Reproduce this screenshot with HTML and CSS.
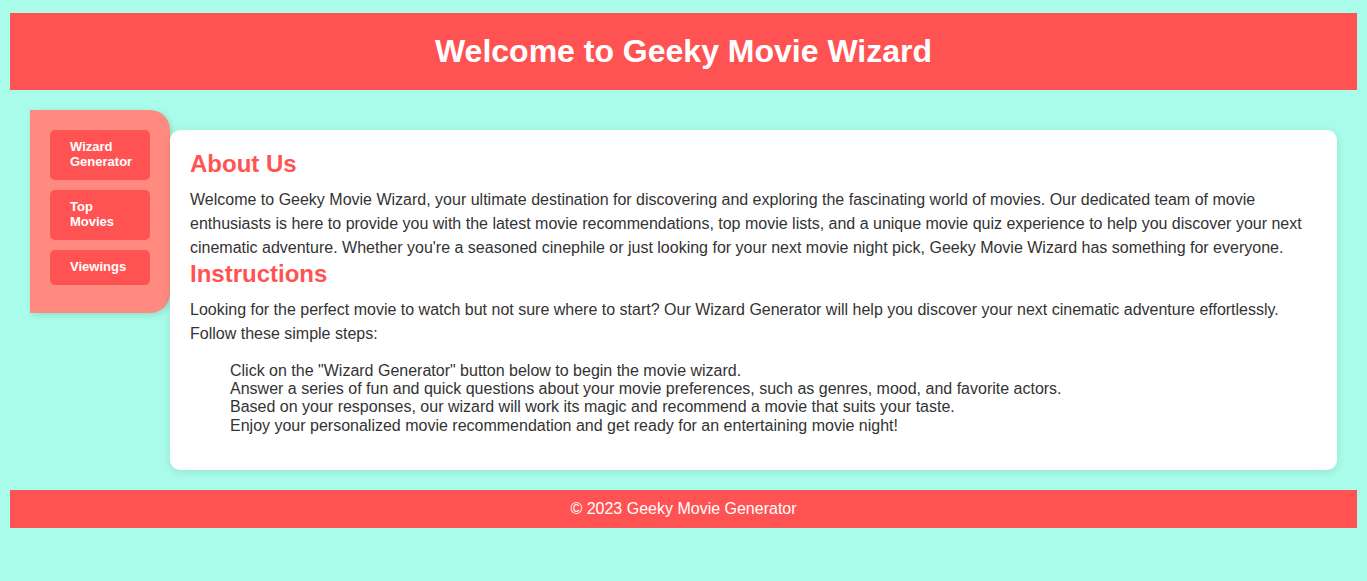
FILE: index.html
```html
<!DOCTYPE html>
<html lang="en">
<head>
<meta charset="utf-8">
<title>Geeky Movie Wizard</title>
<link rel="stylesheet" href="styles.css">
</head>
<body>
<header class="site-header">
  <h1 class="site-title">Welcome to Geeky Movie Wizard</h1>
</header>
<div class="layout">
  <nav class="sidebar">
    <a class="nav-btn" href="#">Wizard Generator</a>
    <a class="nav-btn" href="#">Top Movies</a>
    <a class="nav-btn" href="#">Viewings</a>
  </nav>
  <main class="card">
    <h2 class="card-heading">About Us</h2>
    <p class="card-text">Welcome to Geeky Movie Wizard, your ultimate destination for discovering and exploring the fascinating world of movies. Our dedicated team of movie enthusiasts is here to provide you with the latest movie recommendations, top movie lists, and a unique movie quiz experience to help you discover your next cinematic adventure. Whether you're a seasoned cinephile or just looking for your next movie night pick, Geeky Movie Wizard has something for everyone.</p>
    <h2 class="card-heading">Instructions</h2>
    <p class="card-text">Looking for the perfect movie to watch but not sure where to start? Our Wizard Generator will help you discover your next cinematic adventure effortlessly. Follow these simple steps:</p>
    <ul class="steps">
      <li>Click on the "Wizard Generator" button below to begin the movie wizard.</li>
      <li>Answer a series of fun and quick questions about your movie preferences, such as genres, mood, and favorite actors.</li>
      <li>Based on your responses, our wizard will work its magic and recommend a movie that suits your taste.</li>
      <li>Enjoy your personalized movie recommendation and get ready for an entertaining movie night!</li>
    </ul>
  </main>
</div>
<footer class="site-footer">&copy; 2023 Geeky Movie Generator</footer>
</body>
</html>
```

FILE: styles.css
```css
html, body {
  margin: 0;
  padding: 0;
}

body {
  background: #a8fce9;
  font-family: "Liberation Sans", Arial, sans-serif;
  color: #333;
  padding: 13px 10px 0;
}

.site-header {
  background: #ff5353;
  padding: 20px;
  text-align: center;
}

.site-title {
  margin: 0;
  color: #fff;
  font-size: 32px;
  font-weight: bold;
  line-height: 37px;
}

.layout {
  display: flex;
  align-items: flex-start;
  padding: 20px 20px 0;
}

.sidebar {
  width: 100px;
  padding: 20px 20px 18px;
  background: #ff8a80;
  border-radius: 0 20px 20px 0;
  box-shadow: 2px 2px 6px rgba(0, 0, 0, 0.12);
  display: flex;
  flex-direction: column;
}

.nav-btn {
  display: block;
  background: #ff5353;
  color: #fff;
  font-size: 13px;
  font-weight: bold;
  line-height: 14.75px;
  text-decoration: none;
  padding: 10px 20px;
  border-radius: 5px;
  margin-bottom: 10.5px;
}

.card {
  flex: 1;
  margin-top: 20px;
  background: #fff;
  border-radius: 10px;
  padding: 20px 20px 19px;
  box-shadow: 0 2px 8px rgba(0, 0, 0, 0.1);
}

.card-heading {
  margin: 0;
  color: #ff5353;
  font-size: 24px;
  font-weight: bold;
  line-height: 28px;
}

.card-text {
  margin: 9.5px 0 0.5px;
  font-size: 16px;
  line-height: 24px;
}

.steps {
  list-style: none;
  margin: 16px 0;
  padding-left: 40px;
  font-size: 16px;
  line-height: 18.4px;
}

.site-footer {
  margin-top: 20px;
  background: #ff5353;
  color: #fff;
  text-align: center;
  font-size: 16px;
  line-height: 18px;
  padding: 10px 0;
}
```
